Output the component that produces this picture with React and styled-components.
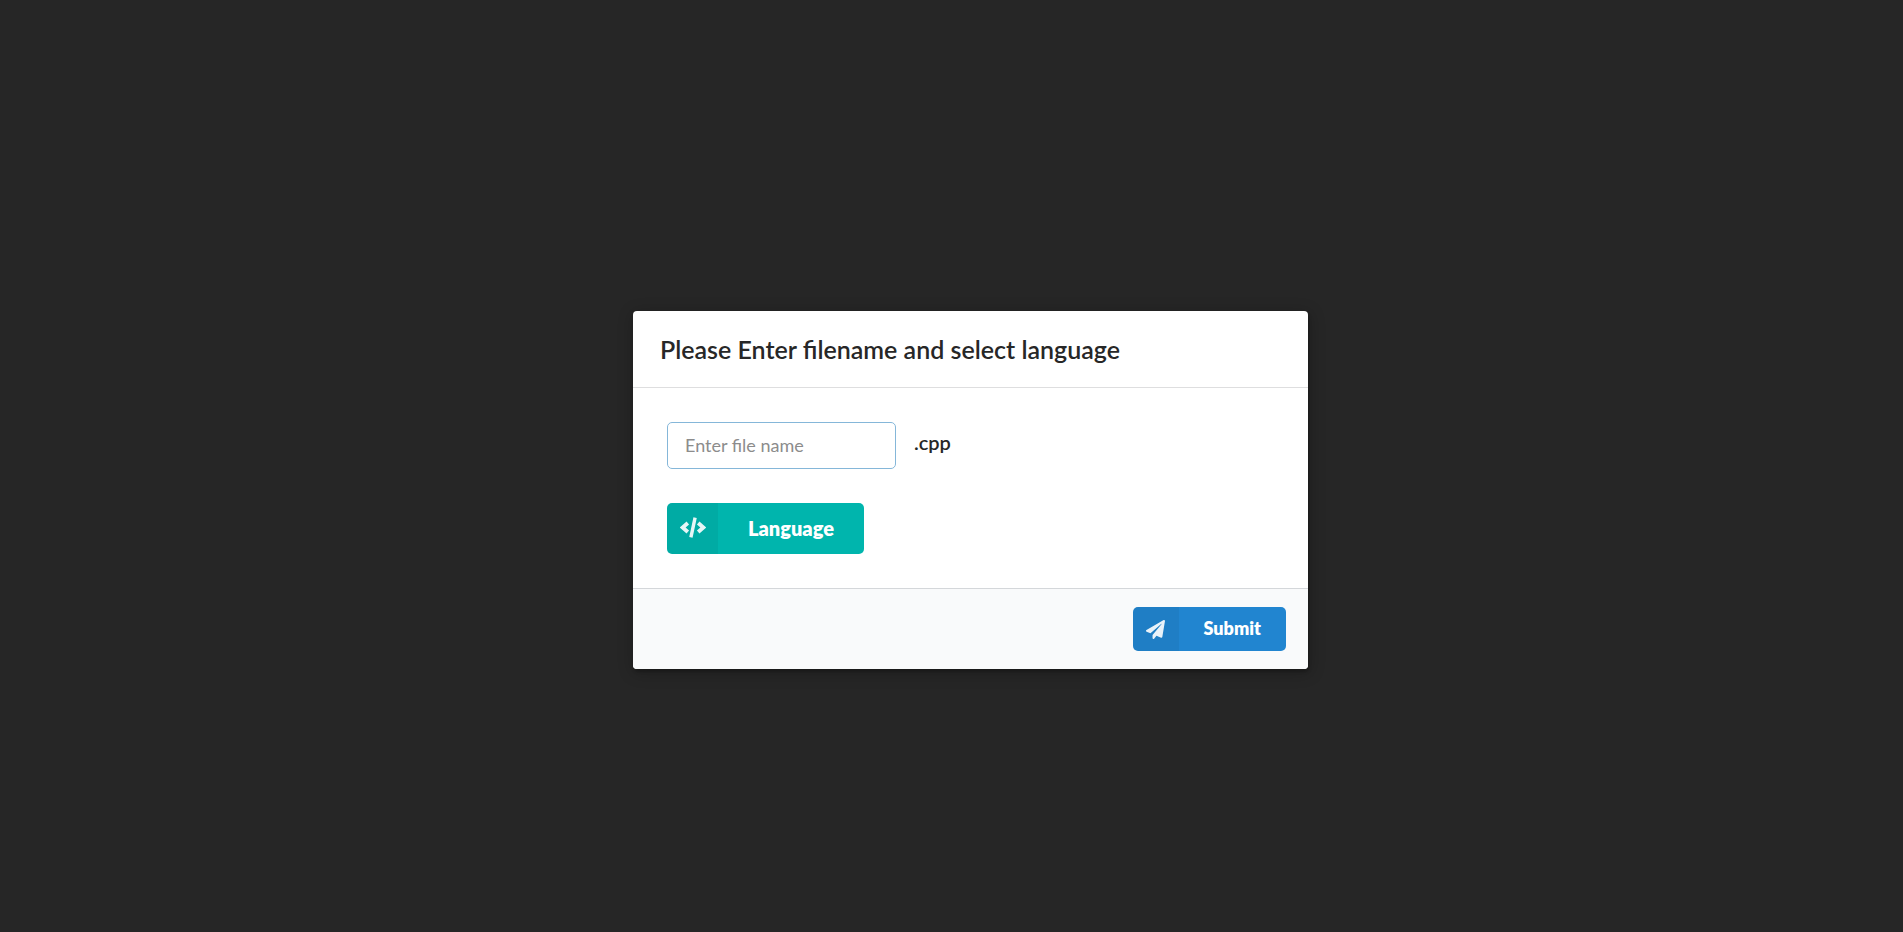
import React, { useState } from "react";
import styled, { createGlobalStyle } from "styled-components";
import { FaPaperPlane } from "react-icons/fa";

const GlobalStyle = createGlobalStyle`
  *, *::before, *::after { box-sizing: border-box; }
  body {
    margin: 0;
    background: #262626;
    font-family: Lato, "Liberation Sans", sans-serif;
    font-size: 18px;
    color: #272727;
  }
`;

const Dimmer = styled.div`
  min-height: 100vh;
  display: flex;
  align-items: center;
  justify-content: center;
  padding: 48px 16px 0 54px;
  background: #262626;
`;

const Dialog = styled.form`
  width: 100%;
  max-width: 675px;
  overflow: hidden;
  border-radius: 4px;
  background: #fff;
  box-shadow: 1px 3px 3px 0 rgba(0, 0, 0, 0.2), 1px 3px 15px 2px rgba(0, 0, 0, 0.2);
`;

const Title = styled.h1`
  margin: 0;
  padding: 22px 27px;
  border-bottom: 1px solid #dededf;
  font-size: 25px;
  font-weight: 600;
  line-height: 32px;
`;

const Content = styled.div`
  display: flex;
  flex-direction: column;
  align-items: flex-start;
  gap: 34px;
  padding: 34px;
`;

const FileRow = styled.div`
  display: flex;
  align-items: center;
  flex-wrap: wrap;
  gap: 18px;
`;

const FileInput = styled.input`
  width: 229px;
  height: 47px;
  padding: 0 17px 2px;
  border: 1px solid #85b7d9;
  border-radius: 5px;
  outline: none;
  background: #fff;
  color: #272727;
  font: inherit;
  &::placeholder { color: #8c8c8c; opacity: 1; }
`;

const Extension = styled.span`
  padding-bottom: 8px;
  font-size: 20px;
  font-weight: 600;
  line-height: 26px;
`;

const Actions = styled.footer`
  display: flex;
  justify-content: flex-end;
  padding: 18px 22px;
  border-top: 1px solid #d4d7da;
  background: #f9fafb;
`;

const LabeledButton = styled.button`
  display: flex;
  align-items: stretch;
  height: ${(p) => (p.$large ? 51 : 44)}px;
  padding: 0;
  overflow: hidden;
  border: 0;
  border-radius: 5px;
  background: ${(p) => p.$color};
  color: #fff;
  font-family: inherit;
  font-size: ${(p) => (p.$large ? 20 : 18)}px;
  font-weight: 800;
  cursor: pointer;
`;

const ButtonIcon = styled.span`
  display: flex;
  align-items: center;
  justify-content: center;
  width: ${(p) => (p.$large ? 51 : 46)}px;
  padding-bottom: ${(p) => (p.$large ? 2 : 0)}px;
  background: rgba(0, 0, 0, 0.05);
  svg { opacity: 0.9; }
`;

const ButtonText = styled.span`
  align-self: center;
  padding: 0 ${(p) => (p.$large ? 30 : 25)}px 2px;
`;

function CodeIcon() {
  return (
    <svg width="26" height="21" viewBox="0 0 26 21" fill="none" stroke="currentColor" aria-hidden="true">
      <path d="M7.8 6 2.7 10.5l5.1 4.5M18.2 6l5.1 4.5-5.1 4.5" strokeWidth="3.8" />
      <path d="M15.1 0.6 10.9 20.4" strokeWidth="3.4" />
    </svg>
  );
}

export default function App() {
  const [name, setName] = useState("");
  return (
    <>
      <GlobalStyle />
      <Dimmer>
        <Dialog role="dialog" aria-labelledby="dialog-title" onSubmit={(e) => e.preventDefault()}>
          <Title id="dialog-title">Please Enter filename and select language</Title>
          <Content>
            <FileRow>
              <FileInput
                type="text"
                aria-label="File name"
                placeholder="Enter file name"
                value={name}
                onChange={(e) => setName(e.target.value)}
              />
              <Extension>.cpp</Extension>
            </FileRow>
            <LabeledButton type="button" $large $color="#00b5ad">
              <ButtonIcon $large><CodeIcon /></ButtonIcon>
              <ButtonText $large>Language</ButtonText>
            </LabeledButton>
          </Content>
          <Actions>
            <LabeledButton type="submit" $color="#2185d0">
              <ButtonIcon><FaPaperPlane size={19} aria-hidden="true" /></ButtonIcon>
              <ButtonText>Submit</ButtonText>
            </LabeledButton>
          </Actions>
        </Dialog>
      </Dimmer>
    </>
  );
}
